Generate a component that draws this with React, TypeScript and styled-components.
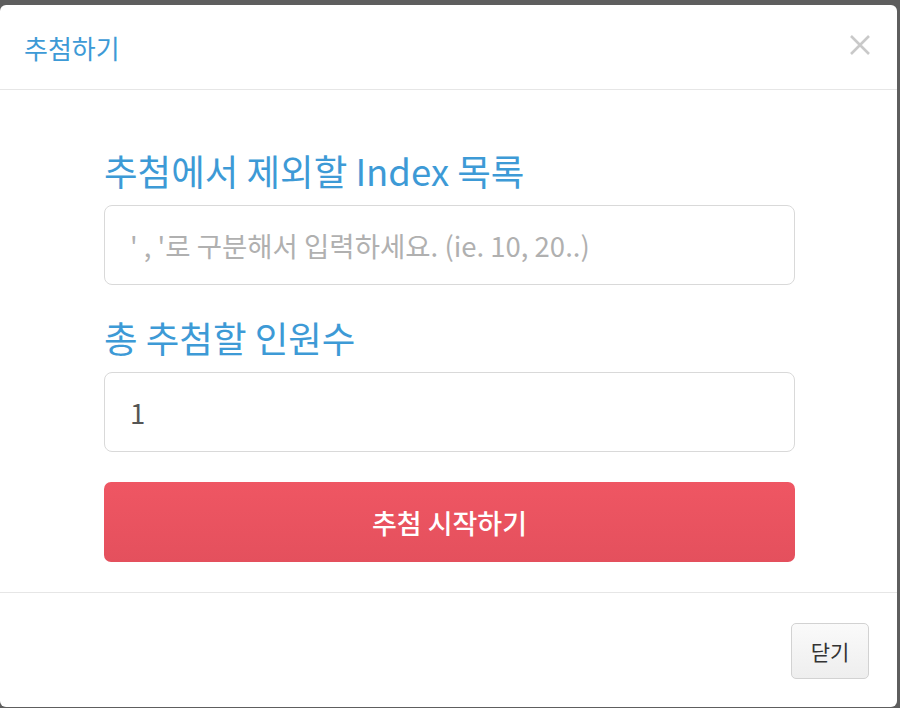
import React from "react";
import styled, { createGlobalStyle } from "styled-components";

const GlobalStyle = createGlobalStyle`
  html, body {
    margin: 0;
    padding: 0;
    background: #5e5e5e;
  }
  body {
    font-family: "Noto Sans CJK KR", "Noto Sans", sans-serif;
  }
`;

const Modal = styled.div`
  margin-top: 5px;
  width: 897px;
  height: 702px;
  background: #fff;
  border-radius: 6px;
  display: flex;
  flex-direction: column;
  overflow: hidden;
`;

const Header = styled.div`
  height: 84px;
  display: flex;
  align-items: center;
  justify-content: space-between;
  padding: 0 26px 0 24px;
  border-bottom: 1px solid #e6e6e6;
`;

const Title = styled.h4`
  margin: 0;
  font-size: 26px;
  font-weight: 400;
  color: #3d9ad6;
`;

const CloseIcon = styled.button`
  border: none;
  background: none;
  padding: 0;
  cursor: pointer;
  display: flex;
  margin-top: -4px;
`;

const Body = styled.div`
  padding: 57px 102px 30px 104px;
  display: flex;
  flex-direction: column;
  border-bottom: 1px solid #e6e6e6;
`;

const Label = styled.label<{ $gap?: number }>`
  font-size: 36.5px;
  line-height: 48px;
  color: #3d9ad6;
  margin-top: ${(p) => p.$gap ?? 0}px;
  margin-bottom: 10px;
`;

const Input = styled.input`
  box-sizing: border-box;
  height: 80px;
  width: 100%;
  border: 1px solid #d9d9d9;
  border-radius: 8px;
  padding: 0 25px;
  font-family: inherit;
  font-size: 27.5px;
  color: #555;
  outline: none;
  &::placeholder {
    color: #b0b0b0;
  }
`;

const StartButton = styled.button`
  margin-top: 30px;
  height: 80px;
  border: none;
  border-radius: 7px;
  background: linear-gradient(#ef5663, #e4505d);
  color: #fff;
  font-family: inherit;
  font-size: 27px;
  font-weight: 500;
  cursor: pointer;
`;

const Footer = styled.div`
  display: flex;
  justify-content: flex-end;
  padding: 30px 28px 0;
`;

const CloseButton = styled.button`
  width: 78px;
  height: 56px;
  border: 1px solid #d2d2d2;
  border-radius: 5px;
  background: linear-gradient(#fafafa, #eeeeee);
  font-family: inherit;
  font-size: 21px;
  color: #333;
  cursor: pointer;
`;

export default function App() {
  return (
    <>
      <GlobalStyle />
      <Modal>
        <Header>
          <Title>추첨하기</Title>
          <CloseIcon aria-label="close">
            <svg width="22" height="22" viewBox="0 0 22 22">
              <path d="M2 2 L20 20 M20 2 L2 20" stroke="#c9c9c9" strokeWidth="2.6" />
            </svg>
          </CloseIcon>
        </Header>
        <Body>
          <Label>추첨에서 제외할 Index 목록</Label>
          <Input placeholder="' , '로 구분해서 입력하세요. (ie. 10, 20..)" />
          <Label $gap={29}>총 추첨할 인원수</Label>
          <Input defaultValue="1" />
          <StartButton>추첨 시작하기</StartButton>
        </Body>
        <Footer>
          <CloseButton>닫기</CloseButton>
        </Footer>
      </Modal>
    </>
  );
}
